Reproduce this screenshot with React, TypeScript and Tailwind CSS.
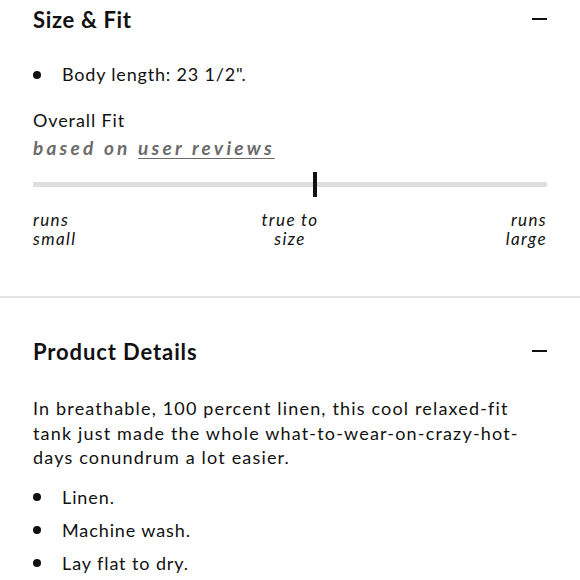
import React from "react";

const Minus = () => <span className="block h-[2px] w-[15px] bg-[#111]" />;

const Bullet = ({ children }: { children: React.ReactNode }) => (
  <li className="flex items-center">
    <span className="h-[8px] w-[8px] shrink-0 rounded-full bg-[#111]" />
    <span className="ml-[21px]">{children}</span>
  </li>
);

const SizeAndFit = () => (
  <section className="px-[33px] pb-[48px]">
    <div className="flex h-[38px] items-center justify-between">
      <h2 className="text-[22px] font-bold tracking-[0.03em]">Size &amp; Fit</h2>
      <Minus />
    </div>
    <ul className="mt-[23px] tracking-[0.045em]">
      <Bullet>Body length: 23 1/2".</Bullet>
    </ul>
    <p className="mt-[18px] leading-[29px]">Overall Fit</p>
    <p className="text-[19px] text-[#6b6b6b] font-bold italic leading-[26px] tracking-[0.17em]">
      based on <span className="underline underline-offset-[3px]">user reviews</span>
    </p>
    <div className="relative mt-[11px] h-[26px]">
      <div className="absolute inset-x-0 top-[10px] h-[5px] bg-[#dedede]" />
      <div className="absolute left-[280px] top-0 h-[25px] w-[4px] bg-[#111]" />
    </div>
    <div className="mt-[12px] grid grid-cols-3 text-[17px] italic leading-[19px] tracking-[0.08em]">
      <span>runs<br />small</span>
      <span className="text-center">true to<br />size</span>
      <span className="text-right">runs<br />large</span>
    </div>
  </section>
);

const ProductDetails = () => (
  <section className="px-[33px] pt-[34px]">
    <div className="flex h-[38px] items-center justify-between">
      <h2 className="text-[22px] font-bold tracking-[0.04em]">Product Details</h2>
      <Minus />
    </div>
    <p className="mt-[26px] leading-[24.5px] tracking-[0.065em] whitespace-nowrap">
      In breathable, 100 percent linen, this cool relaxed-fit
      <br />
      tank just made the whole what-to-wear-on-crazy-hot-
      <br />
      days conundrum a lot easier.
    </p>
    <ul className="mt-[15px] flex flex-col gap-[9px] leading-[24px] tracking-[0.05em]">
      <Bullet>Linen.</Bullet>
      <Bullet>Machine wash.</Bullet>
      <Bullet>Lay flat to dry.</Bullet>
    </ul>
  </section>
);

export default function App() {
  return (
    <div
      className="h-[580px] w-[580px] overflow-hidden bg-white text-[18px] text-[#111] tracking-[0.05em]"
      style={{ fontFamily: "Lato, 'Noto Sans', sans-serif" }}
    >
      <SizeAndFit />
      <div className="h-[2px] bg-[#e3e3e3]" />
      <ProductDetails />
    </div>
  );
}
